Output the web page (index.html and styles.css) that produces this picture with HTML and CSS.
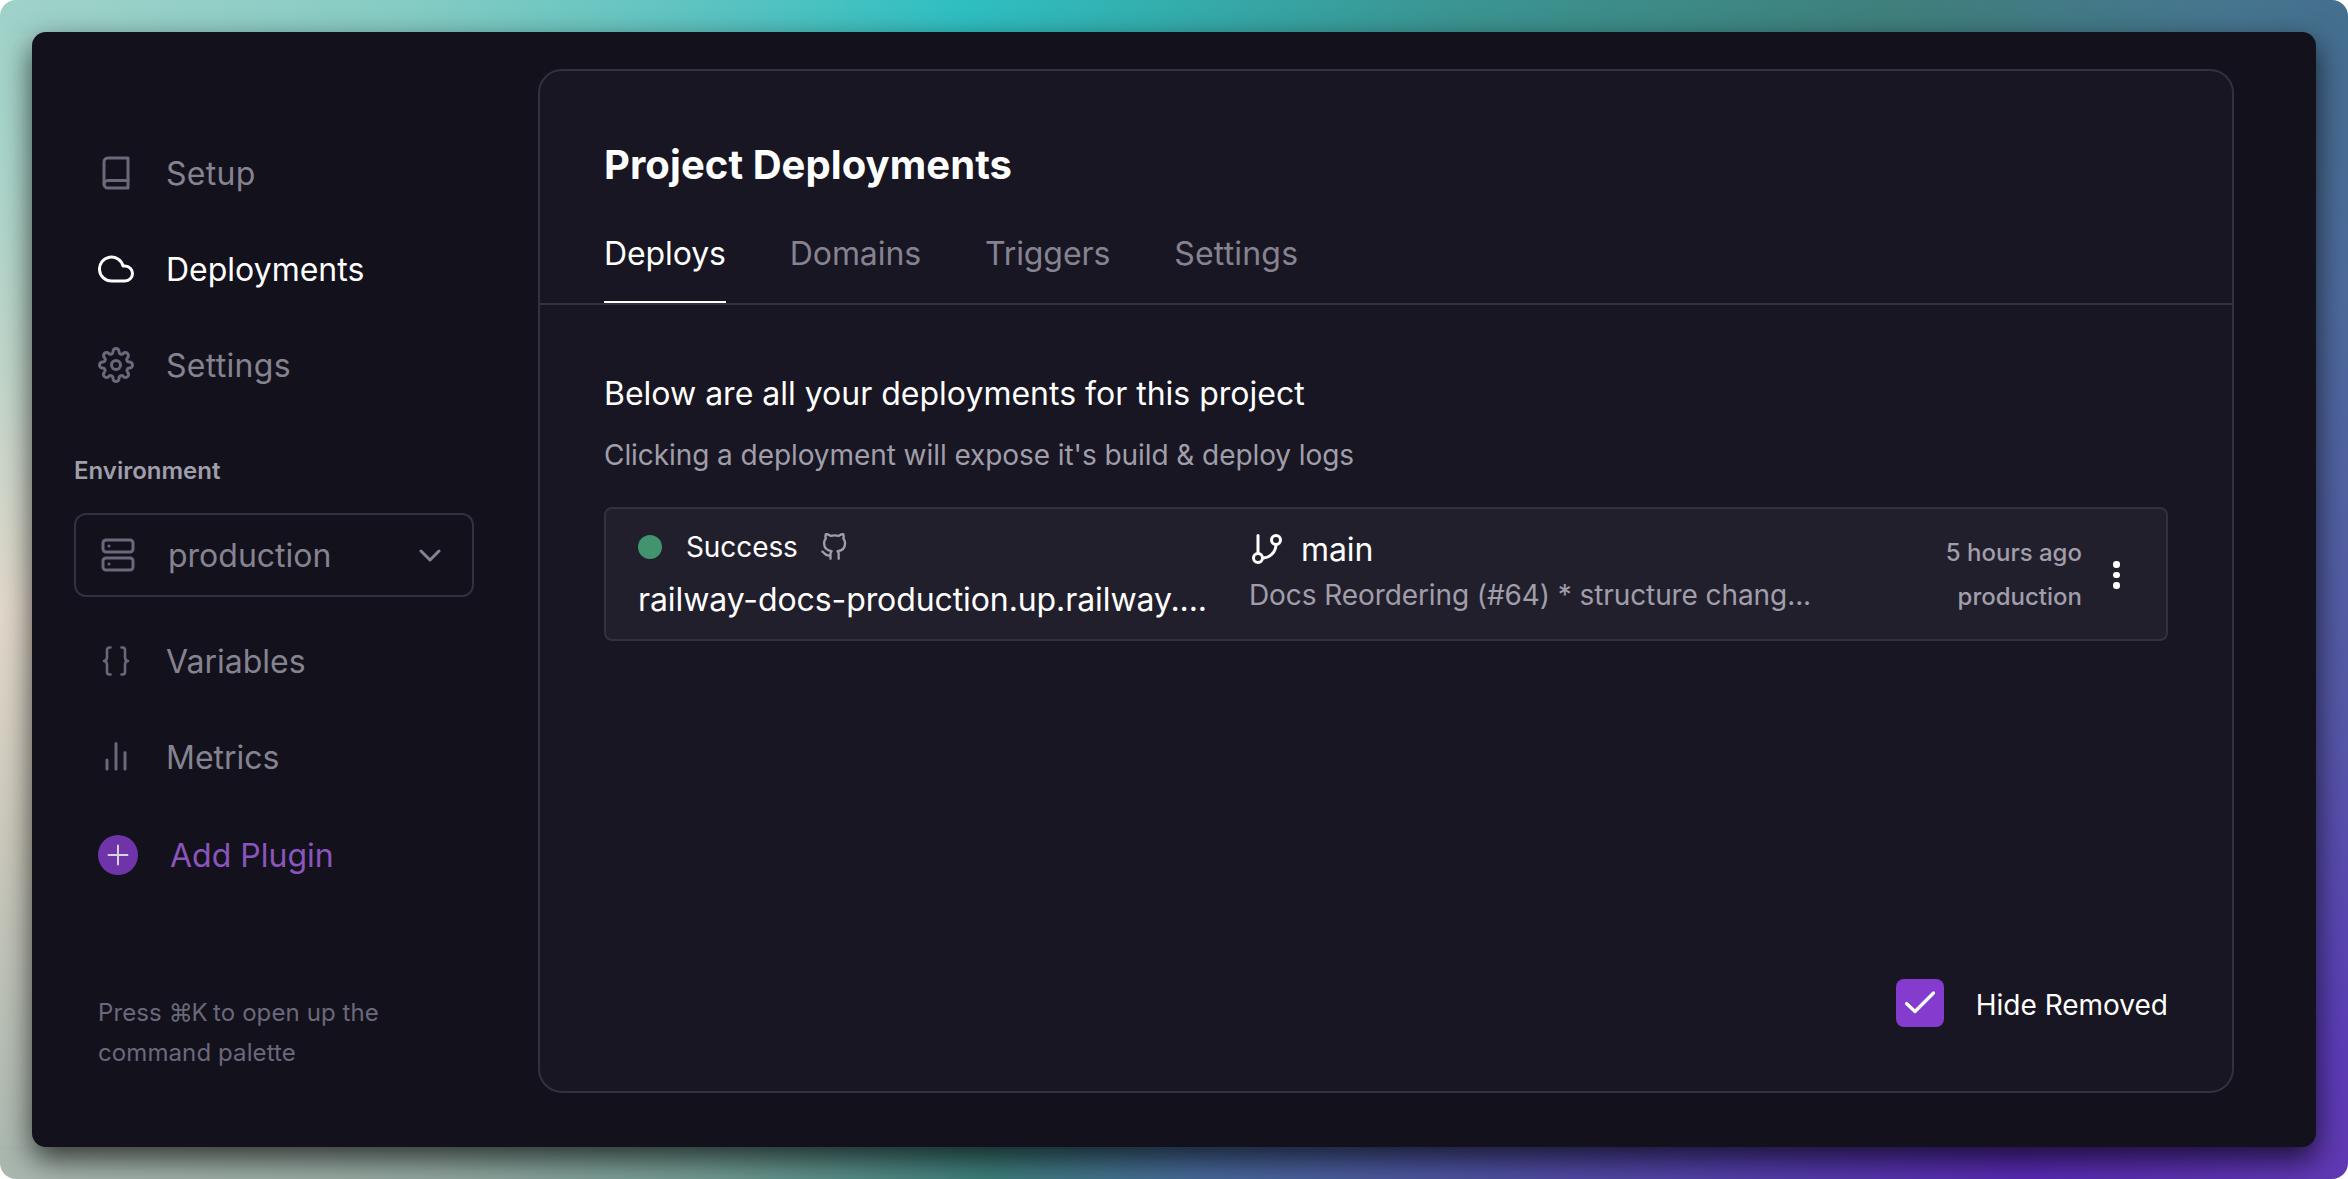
FILE: index.html
```html
<!DOCTYPE html>
<html lang="en">
<head>
<meta charset="utf-8">
<title>Project Deployments</title>
<link rel="stylesheet" href="styles.css">
</head>
<body>
<div class="backdrop">
<div class="window">
  <aside class="sidebar">
    <nav class="nav">
      <a class="nav-item"><svg class="icon" viewBox="0 0 24 24"><path d="M4 19.5A2.5 2.5 0 0 1 6.5 17H20"/><path d="M6.500 2H20v20H6.500A2.500 2.500 0 0 1 4 19.500v-15A2.500 2.500 0 0 1 6.500 2z"/></svg><span class="loose">Setup</span></a>
      <a class="nav-item active"><svg class="icon" viewBox="0 0 24 24"><path d="M18 10h-1.260A8 8 0 1 0 9 20h9a5 5 0 0 0 0-10z"/></svg><span>Deployments</span></a>
      <a class="nav-item"><svg class="icon" viewBox="0 0 24 24"><circle cx="12" cy="12" r="3"/><path d="M19.400 15a1.650 1.650 0 0 0 .33 1.820l.06.06a2 2 0 0 1-2.830 2.830l-.06-.06a1.650 1.650 0 0 0-2.900 1.240V21a2 2 0 0 1-4 0v-.11a1.650 1.650 0 0 0-2.900-1.240l-.06.06a2 2 0 0 1-2.830-2.830l.06-.06A1.650 1.650 0 0 0 3.110 14H3a2 2 0 0 1 0-4h.11a1.650 1.650 0 0 0 1.240-2.820l-.06-.06a2 2 0 0 1 2.830-2.830l.06.06A1.650 1.650 0 0 0 10 3.110V3a2 2 0 0 1 4 0v.11a1.650 1.650 0 0 0 2.820 1.240l.06-.06a2 2 0 0 1 2.830 2.830l-.06.06A1.650 1.650 0 0 0 20.890 10H21a2 2 0 0 1 0 4h-.11A1.650 1.650 0 0 0 19.400 15z"/></svg><span class="loose">Settings</span></a>
    </nav>
    <h2 class="env-label">Environment</h2>
    <div class="select">
      <svg class="icon" viewBox="0 0 24 24"><rect x="2" y="2" width="20" height="8" rx="2"/><rect x="2" y="14" width="20" height="8" rx="2"/><path d="M6 6h.01M6 18h.01"/></svg>
      <span class="select-value">production</span>
      <svg class="chevron" viewBox="0 0 22 13"><path d="M2 2l9 9 9-9"/></svg>
    </div>
    <nav class="nav">
      <a class="nav-item"><svg class="icon" viewBox="0 0 36 36"><path class="brace" d="M12.500 4.500h-1a2.500 2.500 0 0 0-2.500 2.500v7c0 2.200-1 4-3 4 2 0 3 1.800 3 4v7a2.500 2.500 0 0 0 2.500 2.500h1M23.500 4.500h1a2.500 2.500 0 0 1 2.500 2.500v7c0 2.200 1 4 3 4-2 0-3 1.800-3 4v7a2.500 2.500 0 0 1-2.500 2.500h-1"/></svg><span>Variables</span></a>
      <a class="nav-item"><svg class="icon" viewBox="0 0 24 24"><path d="M18 20V9M12 20V3M6 20v-6"/></svg><span>Metrics</span></a>
      <a class="nav-item add"><svg class="plus" viewBox="0 0 40 40"><circle cx="20" cy="20" r="20"/><path d="M20 10.500v19M10.500 20h19"/></svg><span>Add Plugin</span></a>
    </nav>
    <p class="hint">Press <span class="keys">⌘K</span> to open up the<br>command palette</p>
  </aside>
  <main class="panel">
    <header class="panel-head">
      <h1>Project Deployments</h1>
      <div class="tabs"><a class="tab active">Deploys</a><a class="tab">Domains</a><a class="tab">Triggers</a><a class="tab loose">Settings</a></div>
    </header>
    <section class="panel-body">
      <h3>Below are all your deployments for this project</h3>
      <p class="sub">Clicking a deployment will expose it's build &amp; deploy logs</p>
      <article class="deploy">
        <div class="deploy-main">
          <div class="status"><i class="dot"></i><span>Success</span><svg class="github" viewBox="0 0 24 24"><path d="M9 19c-5 1.500-5-2.500-7-3m14 6v-3.870a3.370 3.370 0 0 0-.94-2.610c3.140-.35 6.440-1.540 6.440-7A5.440 5.440 0 0 0 20 4.770 5.070 5.070 0 0 0 19.910 1S18.730.65 16 2.480a13.380 13.380 0 0 0-7 0C6.270.65 5.090 1 5.090 1A5.070 5.070 0 0 0 5 4.770a5.440 5.440 0 0 0-1.500 3.780c0 5.420 3.300 6.610 6.440 7A3.370 3.370 0 0 0 9 18.130V22"/></svg></div>
          <div class="url">railway-docs-production.up.railway....</div>
        </div>
        <div class="commit">
          <div class="branch"><svg class="git" viewBox="0 0 24 24"><path d="M6 3v12"/><circle cx="18" cy="6" r="3"/><circle cx="6" cy="18" r="3"/><path d="M18 9a9 9 0 0 1-9 9"/></svg><span>main</span></div>
          <div class="message">Docs Reordering (#64) * structure chang...</div>
        </div>
        <div class="meta"><span>5 hours ago</span><span>production</span></div>
        <div class="menu"><i></i><i></i><i></i></div>
      </article>
      <label class="toggle"><span class="check"><svg viewBox="0 0 48 48"><path d="M10.500 24.500l8.500 8L37.500 14"/></svg></span><span class="toggle-text">Hide Removed</span></label>
    </section>
  </main>
</div>
</div>
</body>
</html>
```
FILE: styles.css
```css
* { box-sizing: border-box; margin: 0; padding: 0; }
body { background: #fff; font-family: "Inter", "Liberation Sans", sans-serif; color: #fff; font-size: 32px; }
.backdrop {
  width: 2348px; height: 1179px; padding: 32px; border-radius: 16px; overflow: hidden;
  background:
    linear-gradient(90deg, #a0d2c9 0%, #86ccc4 17%, #60c4c1 29%, #2fbfc1 41%, #3b9592 62%, #3f7f7c 81%, #467590 95%, #446f8e 100%) 0 0 / 100% 34px no-repeat,
    linear-gradient(90deg, #aab8b0 0%, #95aaa2 18%, #739c94 30%, #3d7f7b 42%, #47699a 51%, #504ba4 66%, #592ab4 86%, #6039b4 100%) 0 100% / 100% 34px no-repeat,
    linear-gradient(180deg, #a0d2c9 0%, #a8d5cb 12%, #bfd6ca 30%, #e2d8cb 52%, #cdcabd 70%, #aab8b0 100%) 0 0 / 50% 100% no-repeat,
    linear-gradient(180deg, #446f8e 0%, #4d6a9c 25%, #5558a8 60%, #5c3bb8 90%, #6039b4 100%) 100% 0 / 50% 100% no-repeat;
}
.window {
  display: flex; width: 2284px; height: 1115px; border-radius: 14px; background: #13111c;
  box-shadow: 0 12px 30px rgba(0, 0, 0, .7);
}
.sidebar { width: 506px; padding: 93px 64px 0 42px; flex: none; }
.nav-item { display: flex; align-items: center; gap: 32px; height: 96px; padding-left: 24px; color: #868391; line-height: 48px; }
.nav-item span { padding-top: 2px; }
.nav-item.active { color: #fff; }
.loose { letter-spacing: .3px; }
svg { fill: none; stroke: currentColor; stroke-linecap: round; stroke-linejoin: round; stroke-width: 2; flex: none; display: block; }
.icon { width: 36px; height: 36px; color: #6b687b; }
.active .icon { color: #fff; }
.brace { stroke-width: 2.600; }
.env-label { margin-top: 40px; font-size: 24px; line-height: 36px; font-weight: 600; color: #a09eaa; }
.select { display: flex; align-items: center; height: 84px; width: 400px; margin: 24px 0 16px; padding: 0 31px 0 24px; border: 2px solid #33303f; border-radius: 12px; color: #868391; }
.select-value { flex: 1; margin-left: 32px; }
.chevron { width: 22px; height: 13px; stroke-width: 3; }
.add { color: #8a55bd; height: 100px; }
.plus { width: 40px; height: 40px; stroke: #d8d3dc; stroke-width: 2; }
.plus circle { fill: #6f33aa; stroke: none; }
.hint { margin-top: 88px; padding-left: 24px; font-size: 24px; line-height: 40px; color: #6b687b; letter-spacing: .1px; }
.keys { letter-spacing: -1.300px; }
.panel { width: 1696px; height: 1024px; margin-top: 37px; border: 2px solid #33303f; border-radius: 24px; background: #181622; }
.panel-head { padding: 64px 64px 0; height: 234px; border-bottom: 2px solid #33303f; }
h1 { font-size: 40px; line-height: 60px; font-weight: 700; letter-spacing: .07px; }
.tabs { display: flex; gap: 64px; margin-top: 30px; height: 78px; }
.tab { color: #868391; line-height: 58px; height: 78px; letter-spacing: -.1px; }
.tab.loose { letter-spacing: .2px; }
.tab.active { color: #fff; border-bottom: 2px solid #fff; }
.panel-body { padding: 65px 64px 0; }
h3 { font-size: 32px; line-height: 48px; font-weight: 400; }
.sub { margin-top: 16px; font-size: 28px; line-height: 42px; color: #a09eaa; letter-spacing: -.07px; }
.deploy { display: flex; height: 134px; margin-top: 31px; border: 2px solid #33303f; border-radius: 8px; background: #221f2d; padding: 0 42px 0 32px; letter-spacing: -.09px; }
.deploy-main { width: 611px; padding-top: 17px; }
.status { display: flex; align-items: center; height: 42px; font-size: 28px; }
.dot { width: 24px; height: 24px; margin-right: 24px; border-radius: 50%; background: #42946e; }
.github { width: 28px; height: 28px; margin-left: 22px; color: #a09eaa; }
.url { margin-top: 8px; line-height: 48px; }
.commit { flex: 1; padding-top: 16px; }
.branch { display: flex; align-items: center; gap: 16px; height: 48px; }
.git { width: 36px; height: 36px; }
.message { margin-top: 1px; font-size: 28px; line-height: 42px; color: #a09eaa; }
.meta { display: flex; flex-direction: column; align-items: flex-end; padding-top: 22px; font-size: 24px; line-height: 44px; font-weight: 500; color: #a09eaa; letter-spacing: 0; }
.menu { display: flex; flex-direction: column; justify-content: center; gap: 4px; margin: 2px -3px 0 31px; width: 14px; }
.menu i { width: 6.500px; height: 6.500px; border-radius: 50%; background: #fff; }
.toggle { display: flex; justify-content: flex-end; align-items: center; gap: 32px; margin-top: 338px; font-size: 28px; line-height: 42px; }
.toggle-text { padding-top: 4px; }
.check { width: 48px; height: 48px; border-radius: 8px; background: #853bce; }
.check svg { width: 48px; height: 48px; stroke-width: 3.200; }
```
